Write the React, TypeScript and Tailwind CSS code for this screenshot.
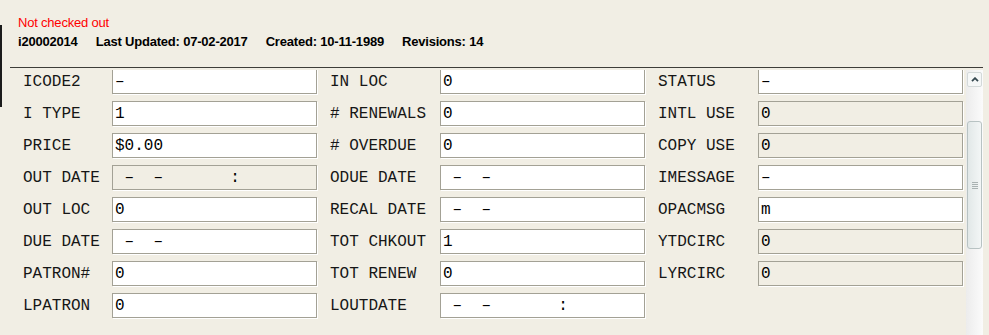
type Field = { label: string; value: string; disabled?: boolean };

const DATE_TIME = " –  –       :";
const DATE = " –  –";

const columns: { labelWidth: string; fields: Field[] }[] = [
	{
		labelWidth: "w-[89px]",
		fields: [
			{ label: "ICODE2", value: "–" },
			{ label: "I TYPE", value: "1" },
			{ label: "PRICE", value: "$0.00" },
			{ label: "OUT DATE", value: DATE_TIME, disabled: true },
			{ label: "OUT LOC", value: "0" },
			{ label: "DUE DATE", value: DATE },
			{ label: "PATRON#", value: "0" },
			{ label: "LPATRON", value: "0" },
		],
	},
	{
		labelWidth: "w-[110px]",
		fields: [
			{ label: "IN LOC", value: "0" },
			{ label: "# RENEWALS", value: "0" },
			{ label: "# OVERDUE", value: "0" },
			{ label: "ODUE DATE", value: DATE },
			{ label: "RECAL DATE", value: DATE },
			{ label: "TOT CHKOUT", value: "1" },
			{ label: "TOT RENEW", value: "0" },
			{ label: "LOUTDATE", value: DATE_TIME },
		],
	},
	{
		labelWidth: "w-[100px]",
		fields: [
			{ label: "STATUS", value: "–" },
			{ label: "INTL USE", value: "0", disabled: true },
			{ label: "COPY USE", value: "0", disabled: true },
			{ label: "IMESSAGE", value: "–" },
			{ label: "OPACMSG", value: "m" },
			{ label: "YTDCIRC", value: "0", disabled: true },
			{ label: "LYRCIRC", value: "0", disabled: true },
		],
	},
];

const FieldRow = ({ field, labelWidth }: { field: Field; labelWidth: string }) => {
	return (
		<div className="flex items-center">
			<span className={`${labelWidth} shrink-0 whitespace-pre pt-px text-[#161616]`}>{field.label}</span>
			<div
				className={`flex h-[25px] w-[205px] shrink-0 items-center border border-[#a3a195] pl-[2px] pt-px shadow-[1px_1px_0_#ffffff] ${
					field.disabled ? "bg-[#f1eee4]" : "bg-white"
				}`}
			>
				<span className="whitespace-pre text-black">{field.value}</span>
			</div>
		</div>
	);
};

const ScrollBar = () => (
	<div className="flex h-full w-[17px] shrink-0 flex-col bg-gradient-to-r from-[#ececec] to-[#fbfbfb]">
		<div className="mx-px mt-[2px] flex h-[15px] w-[15px] items-center justify-center rounded-[2px] border border-[#d3d9d9] bg-[#f5f7f7]">
			<svg width="8" height="5" viewBox="0 0 8 5">
				<path d="M1 4.2 L4 1.2 L7 4.2" fill="none" stroke="#34474f" strokeWidth="1.8" />
			</svg>
		</div>
		<div className="mx-px mt-[34px] flex h-[128px] w-[15px] flex-col items-center justify-center gap-px rounded-[3px] border border-[#b8c3c3] bg-gradient-to-r from-[#e2e8e8] to-[#f3f6f6]">
			<div className="h-px w-[6px] bg-[#a9b2b2]" />
			<div className="h-px w-[6px] bg-[#a9b2b2]" />
			<div className="h-px w-[6px] bg-[#a9b2b2]" />
			<div className="h-px w-[6px] bg-[#a9b2b2]" />
		</div>
	</div>
);

const App = () => {
	return (
		<div className="flex h-[335px] w-[989px] overflow-hidden bg-[#f1eee4] font-['Liberation_Sans',Arial,sans-serif]">
			{/* edge of the window behind */}
			<div className="mt-[25px] h-[82px] w-[2px] shrink-0 bg-[#1b1b1b]" />

			<div className="flex w-[987px] flex-col">
				<div className="pl-[16px] pt-[13px] text-[13px] leading-[19px] tracking-[-0.2px]">
					<div className="text-[#ff0000]">Not checked out</div>
					<div className="flex gap-[18px] font-bold text-black">
						<span>i20002014</span>
						<span>Last Updated: 07-02-2017</span>
						<span>Created: 10-11-1989</span>
						<span>Revisions: 14</span>
					</div>
				</div>

				<div className="ml-[8px] mt-[16px] h-px w-[973px] bg-[#3e3d38]" />

				<div className="ml-[8px] mt-[2px] flex h-[265px] w-[973px]">
					<div className="w-[956px] shrink-0 overflow-hidden pl-[13px] font-['Liberation_Mono','Courier_New',monospace] text-[16px] leading-none">
						<div className="-mt-px flex gap-[13px]">
							{columns.map((col, index) => (
								<div key={index} className="flex flex-col gap-[7px]">
									{col.fields.map((field) => (
										<FieldRow key={field.label} field={field} labelWidth={col.labelWidth} />
									))}
								</div>
							))}
						</div>
					</div>
					<ScrollBar />
				</div>
			</div>
		</div>
	);
};

export default App;
